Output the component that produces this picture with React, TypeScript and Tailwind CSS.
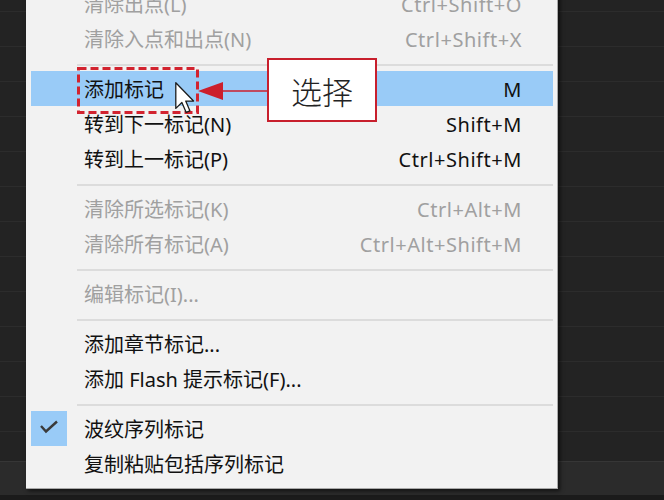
import React from "react";

type Item =
  | { sep: true }
  | { label: string; shortcut?: string; disabled?: boolean; active?: boolean; checked?: boolean };

const items: Item[] = [
  { label: "清除出点(L)", shortcut: "Ctrl+Shift+O", disabled: true },
  { label: "清除入点和出点(N)", shortcut: "Ctrl+Shift+X", disabled: true },
  { sep: true },
  { label: "添加标记", shortcut: "M", active: true },
  { label: "转到下一标记(N)", shortcut: "Shift+M" },
  { label: "转到上一标记(P)", shortcut: "Ctrl+Shift+M" },
  { sep: true },
  { label: "清除所选标记(K)", shortcut: "Ctrl+Alt+M", disabled: true },
  { label: "清除所有标记(A)", shortcut: "Ctrl+Alt+Shift+M", disabled: true },
  { sep: true },
  { label: "编辑标记(I)...", disabled: true },
  { sep: true },
  { label: "添加章节标记..." },
  { label: "添加 Flash 提示标记(F)..." },
  { sep: true },
  { label: "波纹序列标记", checked: true },
  { label: "复制粘贴包括序列标记" },
];

export default function App() {
  const rows = Array.from({ length: 12 });
  return (
    <div
      className="relative w-[664px] h-[500px] overflow-hidden bg-[#232323]"
      style={{ fontFamily: '"Noto Sans", "Noto Sans CJK SC", sans-serif' }}
    >
      {/* background grid rows */}
      <div className="flex flex-col">
        <div className="h-[11px]" />
        {rows.map((_, i) => (
          <div key={i} className="h-[35px] border-t border-[#2c2c2c]" />
        ))}
        <div className="h-[30px] border-t border-[#2c2c2c]" />
        <div className="h-[34px] bg-[#2b2b2b] border-t border-[#363636]" />
        <div className="h-[10px] bg-[#1b1b1b]" />
      </div>

      {/* menu */}
      <div className="absolute left-[26px] top-[-14px] w-[532px] bg-[#f2f2f2] pl-[5px] pr-[4px] pb-[7px] border-r border-b border-[#a9a9a9] shadow-[2px_2px_4px_rgba(0,0,0,0.6)]">
        {items.map((it, i) =>
          "sep" in it ? (
            <div key={i} className="h-[15px] flex items-center pl-[46px] pt-[2px]">
              <div className="h-[2px] w-full bg-[#dcdcdc]" />
            </div>
          ) : (
            <div
              key={i}
              className={`h-[35px] flex items-center text-[20px] leading-none ${
                it.active ? "bg-[#99cbf7]" : ""
              } ${it.disabled ? "text-[#a0a0a0]" : "text-[#111111]"}`}
            >
              <div
                className={`w-[36px] h-[35px] flex items-center justify-center ${
                  it.checked ? "bg-[#99cbf7]" : ""
                }`}
              >
                {it.checked && (
                  <svg width="36" height="35" viewBox="0 0 36 35">
                    <polyline
                      points="10,15 15,20.5 26,10.5"
                      fill="none"
                      stroke="#3a3a3a"
                      strokeWidth="2.4"
                    />
                  </svg>
                )}
              </div>
              <div className="ml-[17px] flex-1 whitespace-pre pt-[3px]">{it.label}</div>
              <div className="pr-[31px] whitespace-pre pt-[3px] tracking-[0.55px]">{it.shortcut ?? ""}</div>
            </div>
          )
        )}
      </div>

      {/* dashed selection rectangle */}
      <svg className="absolute left-[77px] top-[67px]" width="122" height="47" viewBox="0 0 122 47">
        <rect
          x="1.5"
          y="1.5"
          width="119"
          height="44"
          fill="none"
          stroke="#d2232f"
          strokeWidth="3"
          strokeDasharray="8 4"
        />
      </svg>

      {/* mouse cursor */}
      <svg className="absolute left-[175px] top-[82px]" width="20" height="32" viewBox="0 0 12.5 20">
        <path
          d="M0.5 0.5 L0.5 16.5 L4.3 12.8 L7 19 L9.3 18 L6.7 11.9 L11.6 11.9 Z"
          fill="#ffffff"
          stroke="#1a1a1a"
          strokeWidth="0.8"
          strokeLinejoin="round"
        />
      </svg>

      {/* arrow */}
      <svg className="absolute left-[196px] top-[80px]" width="74" height="22" viewBox="0 0 74 22">
        <line x1="24" y1="11" x2="72" y2="11" stroke="#cc1f2c" strokeWidth="1.6" />
        <polygon points="2,11 27,2 27,20" fill="#cc1f2c" />
      </svg>

      {/* callout */}
      <div className="absolute left-[267px] top-[58px] w-[110px] h-[64px] bg-white border-2 border-[#c81f2d] flex items-center justify-center">
        <span
          className="text-[31px] font-light text-[#222] leading-none"
          style={{ fontFamily: '"Noto Sans CJK SC", sans-serif' }}
        >
          选择
        </span>
      </div>
    </div>
  );
}
